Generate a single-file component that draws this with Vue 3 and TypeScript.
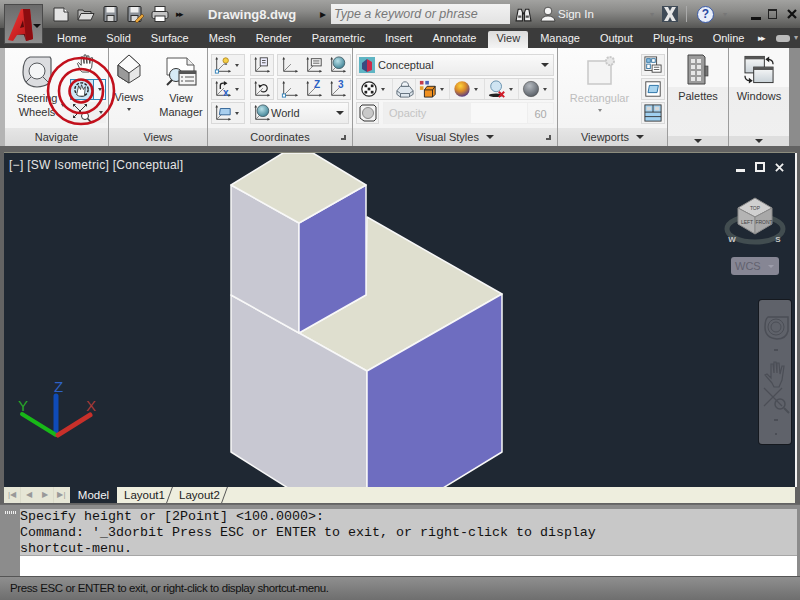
<template>
  <div class="app">
    <svg class="sprite" width="0" height="0" aria-hidden="true">
      <defs>
        <radialGradient id="gold" cx="0.4" cy="0.3" r="0.8">
          <stop offset="0" stop-color="#ffd23a" />
          <stop offset="0.45" stop-color="#d98a2a" />
          <stop offset="1" stop-color="#3a2a9a" />
        </radialGradient>
        <radialGradient id="grey" cx="0.4" cy="0.3" r="0.8">
          <stop offset="0" stop-color="#b5bac0" />
          <stop offset="1" stop-color="#4e545c" />
        </radialGradient>
        <radialGradient id="globe" cx="0.4" cy="0.35" r="0.7">
          <stop offset="0" stop-color="#b8e0e8" />
          <stop offset="1" stop-color="#3b7f92" />
        </radialGradient>
        <linearGradient id="logoRed" x1="0" y1="0" x2="1" y2="1">
          <stop offset="0" stop-color="#f03a36" />
          <stop offset="1" stop-color="#b01014" />
        </linearGradient>
        <linearGradient id="winFill" x1="0" y1="0" x2="0" y2="1">
          <stop offset="0" stop-color="#fafafa" />
          <stop offset="1" stop-color="#c9d2d8" />
        </linearGradient>
      </defs>
      <symbol id="axes" viewBox="0 0 20 20">
        <path d="M3 2v15h15" fill="none" stroke="#3c3c3c" stroke-width="1" />
        <path d="M1.5 4 3 1l1.500 3zM16 15.500l3 1.500-3 1.500z" fill="#3c3c3c" />
        <path d="M3 17 11 9" stroke="#7b7b7b" stroke-width="1" />
      </symbol>
      <symbol id="c-named" viewBox="0 0 20 20">
        <use href="#axes" width="20" height="20" />
        <rect x="1.500" y="15.500" width="3.500" height="3.500" fill="#fff" stroke="#2d7fb8" />
        <circle cx="13" cy="5" r="3" fill="#f4cf45" stroke="#b58a20" />
        <rect x="11.500" y="8" width="3" height="2" fill="#777" />
      </symbol>
      <symbol id="c-form" viewBox="0 0 20 20">
        <use href="#axes" width="20" height="20" />
        <rect x="8" y="2" width="8" height="9" fill="#eef" stroke="#444" />
        <path d="M10 5h4M10 7.500h4" stroke="#444" />
      </symbol>
      <symbol id="c-face" viewBox="0 0 20 20">
        <use href="#axes" width="20" height="20" />
        <path d="M7 10V6q0-2.500 3-2.500h2" fill="none" stroke="#222" stroke-width="1.500" />
        <path d="m11 1 4 2.500-4 2.500z" fill="#222" />
      </symbol>
      <symbol id="c-prev" viewBox="0 0 20 20">
        <use href="#axes" width="20" height="20" />
        <path d="M8 8a4 4 0 1 1 1 4" fill="none" stroke="#222" stroke-width="1.300" />
        <path d="m6 5 4 1-3 3z" fill="#222" />
      </symbol>
      <symbol id="c-plain" viewBox="0 0 20 20">
        <use href="#axes" width="20" height="20" />
      </symbol>
      <symbol id="c-origin" viewBox="0 0 20 20">
        <use href="#axes" width="20" height="20" />
        <rect x="1.500" y="15.500" width="3.500" height="3.500" fill="#fff" stroke="#2d7fb8" />
      </symbol>
      <symbol id="c-list" viewBox="0 0 20 20">
        <use href="#axes" width="20" height="20" />
        <rect x="7" y="3" width="11" height="8" fill="#f4f4f4" stroke="#444" />
        <path d="M9 5.500h7M9 8h7" stroke="#555" />
      </symbol>
      <symbol id="c-globe" viewBox="0 0 20 20">
        <use href="#axes" width="20" height="20" />
        <circle cx="11" cy="7.500" r="6.500" fill="url(#globe)" stroke="#44606a" />
      </symbol>
      <symbol id="c-view" viewBox="0 0 20 20">
        <use href="#axes" width="20" height="20" />
        <path d="M7 5h11v7H6z" fill="#a9cfee" stroke="#2c5f92" />
      </symbol>

      <symbol id="vs-xray" viewBox="0 0 20 20">
        <circle cx="10" cy="10" r="8" fill="#fff" stroke="#222" stroke-width="1.300" />
        <g fill="#222">
          <rect x="5" y="5" width="3" height="3" />
          <rect x="12" y="5" width="3" height="3" />
          <rect x="8.500" y="8.500" width="3" height="3" />
          <rect x="5" y="12" width="3" height="3" />
          <rect x="12" y="12" width="3" height="3" />
        </g>
      </symbol>
      <symbol id="vs-box" viewBox="0 0 20 20">
        <path d="M1 12 5 7h10l4 5v4l-5 3H5l-4-3z" fill="#dfe7ee" stroke="#5a6874" />
        <path d="M6 7q0-5 4-5t4 5z" fill="#eef3f7" stroke="#5a6874" />
        <path d="M1 12l4 3h10l4-3M5 15v4M15 15v4" fill="none" stroke="#5a6874" />
      </symbol>
      <symbol id="vs-color" viewBox="0 0 20 20">
        <rect x="1" y="1" width="4" height="4" fill="#c43a4a" />
        <rect x="7" y="1" width="4" height="4" fill="#4a63b8" />
        <rect x="1" y="7" width="4" height="4" fill="#e8a030" />
        <path d="M6 11l3-4h9v9l-3 3H6z" fill="#f09020" stroke="#222" />
        <path d="M6 11h9v8M15 11l3-4" fill="none" stroke="#222" />
      </symbol>
      <symbol id="vs-gold" viewBox="0 0 20 20">
        <circle cx="10" cy="10" r="8.500" fill="url(#gold)" />
      </symbol>
      <symbol id="vs-shadow" viewBox="0 0 20 20">
        <circle cx="9" cy="7" r="6" fill="#cfe4f2" stroke="#5f8aa8" />
        <ellipse cx="9" cy="17" rx="8" ry="2" fill="#222" />
        <path d="m12 13 6 6m0-6-6 6" stroke="#d01c2a" stroke-width="2.200" />
      </symbol>
      <symbol id="vs-grey" viewBox="0 0 20 20">
        <circle cx="10" cy="10" r="8.500" fill="url(#grey)" stroke="#444" stroke-width="0.600" />
      </symbol>

      <symbol id="vp-config" viewBox="0 0 20 20">
        <rect x="1" y="1" width="13" height="15" fill="#fff" stroke="#444" />
        <rect x="3" y="3" width="4" height="4" fill="#8cc0e4" stroke="#2c6d9c" />
        <rect x="8.500" y="3" width="4" height="4" fill="#fff" stroke="#2c6d9c" />
        <rect x="3" y="9" width="4" height="5" fill="#fff" stroke="#2c6d9c" />
        <rect x="9" y="10" width="10" height="8" fill="#fff" stroke="#444" />
        <path d="M11 12.500h6M11 15h6" stroke="#555" />
      </symbol>
      <symbol id="vp-clip" viewBox="0 0 20 20">
        <rect x="2" y="2" width="16" height="16" fill="#fff" stroke="#444" />
        <path d="M6 6h10l-1.500 8H4.500z" fill="#a8d4ef" stroke="#1d6aa0" />
      </symbol>
      <symbol id="vp-join" viewBox="0 0 20 20">
        <rect x="1" y="1" width="18" height="18" fill="#9fd0f0" stroke="#333" />
        <path d="M10 1v8M1 9h18M1 14h18" stroke="#333" />
        <rect x="3" y="3" width="5" height="4" fill="#d8d8d8" />
        <rect x="12" y="3" width="5" height="4" fill="#d8d8d8" />
      </symbol>
    </svg>

    <header class="titlebar">
      <div class="quick-access">
        <svg v-for="icon in quickIcons" :key="icon.id" class="qa-icon" :style="{ marginRight: icon.gap + 'px' }" viewBox="0 0 18 18">
          <template v-if="icon.id === 'new'">
            <path d="M2 3h10l4 4v9H2z" fill="#e4e4e4" stroke="#333" />
            <path d="M12 3v4h4" fill="#fff" stroke="#333" />
          </template>
          <template v-else-if="icon.id === 'open'">
            <path d="M1 15V5h5l1 1.500h7V9" fill="#bbb" stroke="#333" />
            <path d="M1 15 4 8.500h13L14 15z" fill="#ddd" stroke="#333" />
          </template>
          <template v-else-if="icon.id === 'print'">
            <rect x="4" y="1.500" width="10" height="5" fill="#fff" stroke="#333" />
            <rect x="1" y="6.500" width="16" height="7" rx="1.500" fill="#c5c5c5" stroke="#333" />
            <rect x="4" y="11" width="10" height="5.500" fill="#fff" stroke="#333" />
          </template>
          <template v-else>
            <rect x="2" y="1.500" width="13" height="15" rx="1" fill="#8d9299" stroke="#222" />
            <rect x="4.500" y="2" width="8" height="5.500" fill="#eee" />
            <rect x="5" y="10.500" width="7" height="6" fill="#d8d8d8" stroke="#333" />
            <path v-if="icon.id === 'saveas'" d="m9 16 7-7 2 2-7 7z" fill="#e8a53a" stroke="#5c3a10" stroke-width="0.600" />
          </template>
        </svg>
        <span class="more-arrows">&#9656;&#9656;</span>
      </div>
      <span class="doc-title">Drawing8.dwg</span>
      <span class="search-arrow">&#9656;</span>
      <div class="search-box">Type a keyword or phrase</div>
      <svg class="binoculars" viewBox="0 0 16 16">
        <path d="M1 14 3 3h3l1 3v8zM15 14 13 3h-3L9 6v8z" fill="#eee" stroke="#222" />
        <path d="M3 10h3M10 10h3" stroke="#555" stroke-width="2" />
        <path d="M7 7h2" stroke="#222" stroke-width="2" />
      </svg>
      <svg class="person" viewBox="0 0 16 16">
        <circle cx="8" cy="5" r="3.800" fill="#f4f4f4" stroke="#222" stroke-width="0.700" />
        <path d="M1 15q1-5 7-5t7 5z" fill="#f4f4f4" stroke="#222" stroke-width="0.700" />
      </svg>
      <span class="sign-in">Sign In</span>
      <span class="mini-arrow">&#9662;</span>
      <svg class="x-box" viewBox="0 0 16 16">
        <rect width="16" height="16" fill="#3f4a56" />
        <path d="M2 1h4l2 4 2-4h4l-4 7 4 7h-4l-2-4-2 4H2l4-7z" fill="#e6e6e6" />
      </svg>
      <i class="title-sep"></i>
      <span class="help">?</span>
      <span class="mini-arrow help-arrow">&#9662;</span>
      <div class="win-buttons">
        <i class="win-min"></i>
        <i class="win-max"></i>
        <svg class="win-close" viewBox="0 0 10 10">
          <path d="m1 1 8 8m0-8-8 8" stroke="#111" stroke-width="2.200" />
        </svg>
      </div>
    </header>

    <nav class="tabs">
      <span v-for="tab in tabs" :key="tab" class="tab" :class="{ active: tab === 'View' }">{{ tab }}</span>
      <span class="tab-more">&#9656;&#9656;</span>
      <span class="tab-pill"></span>
      <span class="tab-caret">&#9662;</span>
    </nav>

    <div class="app-button">
      <svg viewBox="0 0 37 38" class="logo">
        <path d="M3 35 16 4h9l3 30-7 2-1-7-8 1-4 6z" fill="url(#logoRed)" />
        <path d="M25 4l3 30-7 2-3-32z" fill="#8c0c10" />
        <path d="M12 30l8-1 1 7-2-6z" fill="#5c0a0c" />
        <path d="M15 23l3-8 1 7z" fill="#5c0a0c" />
      </svg>
      <span class="app-caret"></span>
    </div>

    <section class="ribbon">
      <div class="panel navigate">
        <div class="panel-body">
          <div class="big-btn wheel-btn">
            <svg class="wheel" viewBox="0 0 30 32">
              <path d="M8 1h20l1 2v19q0 8-14 9Q1 30 1 16 1 3 8 1z" fill="#dcdde0" stroke="#55585c" stroke-width="1.200" />
              <circle cx="15" cy="15" r="8" fill="#f4f5f6" stroke="#55585c" />
              <path d="m9 21-5 5m17-5 5 5" stroke="#55585c" />
            </svg>
            <span>Steering</span>
            <span>Wheels</span>
          </div>
          <div class="nav-stack">
            <svg class="nav-hand" viewBox="0 0 22 20">
              <path d="M5 17 2 10l1-1 3 3V3l2 0 1 7V1h2l1 9V2h2l1 8 1-6h2l-1 10-3 5H7z" fill="#fff" stroke="#333" stroke-width="0.900" />
            </svg>
            <div class="orbit-btn">
              <span class="orbit-main">
                <svg class="orbit-icon" viewBox="0 0 20 20">
                  <circle cx="10" cy="10" r="7" fill="none" stroke="#222" stroke-dasharray="3 1.500" stroke-width="1.500" />
                  <path d="M5 15 7 6l2 4 1-5 2 5 2-3-1 10H7z" fill="#fff" stroke="#222" stroke-width="0.800" />
                </svg>
              </span>
              <span class="orbit-arrow"><i class="caret small"></i></span>
            </div>
            <div class="zoom-btn">
              <svg class="zoom-icon" viewBox="0 0 20 20">
                <path d="m2 2 12 12M14 2 2 14" stroke="#333" />
                <path d="M1 1h3L1 4zM15 1v3l-3-3zM1 15v-3l3 3z" fill="#333" />
                <circle cx="13" cy="13" r="3.500" fill="#fff" stroke="#333" />
                <path d="m15.500 15.500 3.500 3.500" stroke="#333" stroke-width="1.500" />
              </svg>
              <i class="caret small"></i>
            </div>
          </div>
          <i class="caret small wheel-caret"></i>
        </div>
        <div class="panel-label">Navigate</div>
      </div>

      <div class="panel views">
        <div class="panel-body">
          <div class="big-btn views-btn">
            <svg class="views-cube" viewBox="0 0 24 30">
              <path d="M12 1 23 11v11L12 29 1 22V11z" fill="#e7e7e7" stroke="#444" />
              <path d="M1 11 12 19 23 11 12 1z" fill="#fbfbfb" stroke="#444" />
              <path d="M12 19v10L1 22V11z" fill="#9a9a9a" stroke="#444" />
            </svg>
            <span>Views</span>
            <i class="caret small"></i>
          </div>
          <div class="big-btn manager-btn">
            <svg class="manager" viewBox="0 0 32 30">
              <path d="M2 1h20l7 7v10H2z" fill="#fff" stroke="#555" />
              <path d="M22 1v7h7" fill="#eee" stroke="#555" />
              <circle cx="11" cy="18" r="6.500" fill="#d7ebf7" stroke="#333" />
              <path d="m7 23-5 5" stroke="#333" stroke-width="2" />
              <rect x="14" y="14" width="17" height="14" fill="#f5f5f5" stroke="#333" />
              <rect x="14" y="14" width="17" height="3" fill="#555" />
              <path d="M16 20h2M20 20h9M16 24h2M20 24h9" stroke="#555" />
            </svg>
            <span>View</span>
            <span>Manager</span>
          </div>
        </div>
        <div class="panel-label">Views</div>
      </div>

      <div class="panel coordinates">
        <div class="panel-body coord-body">
          <div class="coord-col first">
            <div v-for="item in coordFirst" :key="item.id" class="tool split">
              <svg class="ic"><use :href="'#' + item.id" /></svg>
              <b v-if="item.mark" class="cell-mark first-mark">{{ item.mark }}</b>
              <i class="caret small"></i>
            </div>
          </div>
          <div class="coord-main">
            <div v-for="(row, r) in coordRows" :key="r" class="coord-row">
              <div class="tool single"><svg class="ic"><use :href="'#' + row.single" /></svg></div>
              <div class="tool-group">
                <span v-for="cell in row.group" :key="cell.id + cell.mark" class="group-cell">
                  <svg class="ic"><use :href="'#' + cell.id" /></svg>
                  <b v-if="cell.mark" class="cell-mark">{{ cell.mark }}</b>
                </span>
              </div>
            </div>
            <div class="combo world">
              <svg class="ic"><use href="#c-globe" /></svg>
              <span>World</span>
              <i class="caret"></i>
            </div>
          </div>
        </div>
        <div class="panel-label">Coordinates<i class="launcher"></i></div>
      </div>

      <div class="panel visual">
        <div class="panel-body vs-body">
          <div class="combo conceptual">
            <svg class="swatch" viewBox="0 0 16 16">
              <rect width="16" height="16" fill="#5fb5c4" />
              <path d="M8 2 13 5v8l-5 2z" fill="#c92a4a" />
              <path d="M8 2 3 6v6l5 3z" fill="#3a4a80" />
            </svg>
            <span>Conceptual</span>
            <i class="caret"></i>
          </div>
          <div class="vs-row">
            <span v-for="cell in visualCells" :key="cell.id" class="vs-cell" :style="{ width: cell.width + 'px' }">
              <svg class="ic"><use :href="'#' + cell.id" /></svg>
              <i v-if="cell.arrow" class="caret small"></i>
            </span>
          </div>
          <div class="opacity-row">
            <span class="opacity-btn">
              <svg class="ic" viewBox="0 0 18 18">
                <path d="M3 1h12l2 2v12l-2 2H5l-4-3V3z" fill="#f3f3f3" stroke="#333" />
                <circle cx="9" cy="9" r="5.500" fill="#c9c9c9" stroke="#8a8a8a" />
              </svg>
            </span>
            <div class="opacity-slider"><span class="opacity-fill">Opacity</span></div>
            <span class="opacity-value">60</span>
          </div>
        </div>
        <div class="panel-label">Visual Styles<i class="caret label-caret"></i><i class="launcher"></i></div>
      </div>

      <div class="panel viewports">
        <div class="panel-body vp-body">
          <div class="big-btn rect-btn">
            <svg class="rect-icon" viewBox="0 0 30 30">
              <rect x="1" y="6" width="23" height="23" fill="#f4f4f4" stroke="#c8c8c8" stroke-width="1.500" />
              <circle cx="23" cy="6" r="4" fill="#e8e8e8" stroke="#c8c8c8" stroke-dasharray="2 1" stroke-width="2" />
            </svg>
            <span>Rectangular</span>
            <i class="caret small faint"></i>
          </div>
          <div class="vp-tools">
            <span v-for="id in viewportIcons" :key="id" class="tool single"><svg class="ic"><use :href="'#' + id" /></svg></span>
          </div>
        </div>
        <div class="panel-label">Viewports<i class="caret label-caret"></i></div>
      </div>

      <div class="panel tall palettes">
        <div class="panel-body tall-body">
          <svg class="palette-icon" viewBox="0 0 22 32">
            <path d="M1 1h15l2 2v27H1z" fill="#9b9b9b" stroke="#444" />
            <g fill="#e6e6e6">
              <rect v-for="cell in paletteCells" :key="cell.x + '-' + cell.y" :x="cell.x" :y="cell.y" width="4" height="4" />
            </g>
            <rect x="18" y="12" width="3" height="10" fill="#777" stroke="#333" stroke-width="0.600" />
          </svg>
          <span>Palettes</span>
        </div>
        <div class="tall-foot"><i class="caret"></i></div>
      </div>

      <div class="panel tall windows">
        <div class="panel-body tall-body">
          <svg class="windows-icon" viewBox="0 0 32 29">
            <rect x="1" y="1" width="20" height="17" fill="url(#winFill)" stroke="#333" />
            <rect x="1" y="1" width="20" height="3" fill="#555" />
            <rect x="10" y="12" width="20" height="16" fill="url(#winFill)" stroke="#333" />
            <rect x="10" y="12" width="20" height="3" fill="#555" />
            <path d="M24 4q6 0 6 5M1 21q0 5 5 5" fill="none" stroke="#222" stroke-width="1.300" />
            <path d="m26 1-4 3 4 3zM5 23l4 3-4 3z" fill="#222" />
          </svg>
          <span>Windows</span>
        </div>
        <div class="tall-foot"><i class="caret"></i></div>
      </div>

      <svg class="target" viewBox="0 0 70 70">
        <circle cx="35" cy="35" r="33" />
        <circle cx="35" cy="35" r="22" />
        <circle cx="35" cy="35" r="11.500" />
      </svg>
    </section>

    <main class="viewport">
      <svg class="model" viewBox="4 153 791 334">
        <g stroke="#f8f8f8" stroke-width="1.500" stroke-linejoin="round">
          <polygon class="face-top" points="367,217 502,294 367,371 299,333 366,295" />
          <polygon class="face-left" points="231,295 367,371 367,488 288,488 231,452" />
          <polygon class="face-right" points="367,371 502,294 502,452 443,488 367,488" />
          <polygon class="face-left" points="231,185 299,223 299,333 231,295" />
          <polygon class="face-right" points="299,223 366,185 366,295 299,333" />
          <polygon class="face-top" points="231,185 283,153 313,153 366,185 299,223" />
        </g>
        <g fill="none" stroke-width="1">
          <path d="M56 433V396" stroke="#0f4bb8" stroke-width="5" stroke-linecap="round" />
          <path d="M56 435 22 414" stroke="#18b818" stroke-width="4" stroke-linecap="round" />
          <path d="M58 435 90 415" stroke="#c8302a" stroke-width="5" stroke-linecap="round" />
        </g>
        <text x="54" y="392" class="axis-z">Z</text>
        <text x="18" y="411" class="axis-y">Y</text>
        <text x="86" y="411" class="axis-x">X</text>
      </svg>

      <div class="view-label">[&minus;] [SW Isometric] [Conceptual]</div>

      <div class="view-controls">
        <i class="vc-min"></i>
        <i class="vc-max"></i>
        <svg class="vc-close" viewBox="0 0 10 10">
          <path d="m1 1 8 8m0-8-8 8" stroke="#f0f0f0" stroke-width="2" />
        </svg>
      </div>

      <svg class="view-cube" viewBox="0 0 64 50">
        <ellipse cx="32" cy="32" rx="28" ry="13" fill="none" stroke="#424d50" stroke-width="5" />
        <polygon points="32,1 49,11 32,20 15,11" fill="#d0d0d0" stroke="#8a8a8a" />
        <polygon points="15,11 32,20 32,37 15,27" fill="#b4b4b4" stroke="#8a8a8a" />
        <polygon points="32,20 49,11 49,27 32,37" fill="#a8a8a8" stroke="#8a8a8a" />
        <text x="32" y="13" class="cube-text">TOP</text>
        <text x="24" y="27" class="cube-text">LEFT</text>
        <text x="41" y="27" class="cube-text">FRONT</text>
        <text x="9" y="45" class="compass">W</text>
        <text x="55" y="45" class="compass">S</text>
      </svg>

      <div class="wcs">WCS<i></i></div>

      <div class="nav-bar">
        <svg viewBox="0 0 30 140" class="nav-bar-icons">
          <g fill="none" stroke="#4b4e56">
            <path d="M8 17h20v14q-2 8-11 8Q5 38 5 27 5 19 8 17z" stroke-width="1.500" />
            <circle cx="16" cy="27" r="5" />
            <circle cx="16" cy="27" r="8" />
            <path d="M12 83 5 75l2-1 4 4V64h2l1 9V62h2l1 11V63h2l1 11 2-8h2l-2 14-3 7H14z" stroke-width="1.200" />
            <path d="m4 88 18 18M22 88 4 106" stroke-width="1.200" />
            <circle cx="20" cy="104" r="5" stroke-width="1.500" />
            <path d="m24 108 5 5" stroke-width="2" />
            <path d="M14 50h4M14 120h4M15 134h2" stroke-width="2" />
          </g>
        </svg>
      </div>
    </main>

    <div class="layout-tabs">
      <div class="layout-nav">
        <span v-for="(glyph, i) in layoutNav" :key="i" class="nav-cell">{{ glyph }}</span>
      </div>
      <span class="ltab model-tab">Model</span>
      <span class="ltab">Layout1</span>
      <span class="ltab">Layout2</span>
    </div>

    <section class="command">
      <div class="command-grip"><i></i></div>
      <div class="command-area">
        <div class="command-history">
          <div v-for="line in commandLines" :key="line">{{ line }}</div>
        </div>
        <div class="command-input"></div>
      </div>
    </section>

    <footer class="status">Press ESC or ENTER to exit, or right-click to display shortcut-menu.</footer>
  </div>
</template>

<script setup lang="ts">
interface QuickIcon {
  id: string
  gap: number
}

interface CoordCell {
  id: string
  mark?: string
}

interface VisualCell {
  id: string
  width: number
  arrow: boolean
}

const quickIcons: QuickIcon[] = [
  { id: 'new', gap: 7 },
  { id: 'open', gap: 7 },
  { id: 'save', gap: 6 },
  { id: 'saveas', gap: 7 },
  { id: 'print', gap: 7 },
]

const tabs = [
  'Home',
  'Solid',
  'Surface',
  'Mesh',
  'Render',
  'Parametric',
  'Insert',
  'Annotate',
  'View',
  'Manage',
  'Output',
  'Plug-ins',
  'Online',
]

const coordFirst: CoordCell[] = [{ id: 'c-named' }, { id: 'c-face', mark: 'x' }, { id: 'c-view' }]

const coordRows: { single: string; group: CoordCell[] }[] = [
  { single: 'c-form', group: [{ id: 'c-plain' }, { id: 'c-list' }, { id: 'c-globe' }] },
  { single: 'c-prev', group: [{ id: 'c-origin' }, { id: 'c-plain', mark: 'Z' }, { id: 'c-plain', mark: '3' }] },
]

const visualCells: VisualCell[] = [
  { id: 'vs-xray', width: 36, arrow: true },
  { id: 'vs-box', width: 24, arrow: false },
  { id: 'vs-color', width: 34, arrow: true },
  { id: 'vs-gold', width: 35, arrow: true },
  { id: 'vs-shadow', width: 35, arrow: true },
  { id: 'vs-grey', width: 34, arrow: true },
]

const viewportIcons = ['vp-config', 'vp-clip', 'vp-join']

const paletteCells = [5, 11, 17, 23].flatMap((y) => [4, 10].map((x) => ({ x, y })))

const layoutNav = ['|◀', '◀', '▶', '▶|']

const commandLines = [
  'Specify height or [2Point] <100.0000>:',
  "Command: '_3dorbit Press ESC or ENTER to exit, or right-click to display",
  'shortcut-menu.',
]
</script>

<style>
html,
body {
  margin: 0;
  overflow: hidden;
}
</style>

<style scoped>
.app {
  position: relative;
  width: 800px;
  height: 600px;
  overflow: hidden;
  display: flex;
  flex-direction: column;
  background: #636363;
  font-family: 'Liberation Sans', Arial, sans-serif;
  font-size: 11px;
  color: #222;
}

.sprite {
  position: absolute;
}

/* title bar */
.titlebar {
  height: 28px;
  flex: none;
  display: flex;
  align-items: center;
  background: linear-gradient(#a2a2a0, #8b8b89 40%, #565654);
  color: #f2f2f2;
}

.quick-access {
  display: flex;
  align-items: center;
  margin-left: 52px;
  width: 156px;
}

.qa-icon {
  width: 18px;
  height: 18px;
}

.more-arrows {
  font-size: 9px;
  letter-spacing: -2px;
  color: #111;
}

.doc-title {
  width: 112px;
  font-size: 13px;
  font-weight: bold;
  color: #f0f0f0;
}

.search-arrow {
  width: 11px;
  color: #111;
  font-size: 12px;
}

.search-box {
  width: 176px;
  height: 20px;
  line-height: 20px;
  padding-left: 3px;
  background: linear-gradient(#f2f2f2, #e2e2e2);
  color: #777;
  font-style: italic;
  font-size: 12.500px;
  margin-right: 5px;
}

.binoculars {
  width: 17px;
  height: 17px;
  margin-right: 8px;
}

.person {
  width: 16px;
  height: 16px;
  margin-right: 2px;
}

.sign-in {
  width: 92px;
  font-size: 11.500px;
}

.mini-arrow {
  width: 12px;
  font-size: 8px;
  color: #777;
}

.x-box {
  width: 16px;
  height: 16px;
  margin-right: 8px;
}

.title-sep {
  width: 1px;
  height: 16px;
  background: #aaa;
  margin-right: 10px;
}

.help {
  width: 15px;
  height: 15px;
  margin-right: 9px;
  border-radius: 50%;
  border: 1px solid #3a5aa8;
  box-sizing: content-box;
  background: #e8eefa;
  color: #2a4aa0;
  font-size: 12px;
  font-weight: bold;
  line-height: 15px;
  text-align: center;
}

.help-arrow {
  width: 28px;
}

.win-buttons {
  display: flex;
  align-items: center;
}

.win-min {
  width: 10px;
  height: 3px;
  margin-top: 8px;
  background: #111;
}

.win-max {
  width: 7px;
  height: 7px;
  border: 1px solid #222;
  border-top-width: 2px;
  margin-left: 7px;
}

.win-close {
  width: 10px;
  height: 10px;
  margin-left: 10px;
}

/* tab strip */
.tabs {
  height: 20px;
  flex: none;
  display: flex;
  align-items: stretch;
  padding-left: 49px;
  background: #3b3b3b;
  color: #f2f2f2;
  white-space: nowrap;
}

.tab {
  padding: 0 8px;
  margin-right: 4px;
  line-height: 20px;
  font-size: 11px;
}

.tab.active {
  margin-top: 3px;
  line-height: 15px;
  background: linear-gradient(#dbdbdb, #f4f4f4);
  color: #333;
  border-radius: 2px 2px 0 0;
}

.tab-more {
  margin-left: 2px;
  line-height: 20px;
  font-size: 9px;
  letter-spacing: -2px;
  width: 18px;
}

.tab-pill {
  width: 14px;
  height: 7px;
  margin-top: 7px;
  border-radius: 3px;
  background: #bbb;
}

.tab-caret {
  margin-left: 4px;
  line-height: 20px;
  font-size: 8px;
  color: #aaa;
}

/* application button */
.app-button {
  position: absolute;
  left: 4px;
  top: 4px;
  width: 39px;
  height: 40px;
  box-sizing: border-box;
  border: 1px solid #4a4a4a;
  background: linear-gradient(#6b6b6b, #8d8d8d);
}

.logo {
  width: 37px;
  height: 38px;
  display: block;
}

.app-caret {
  position: absolute;
  left: 28px;
  top: 19px;
  border: 4px solid transparent;
  border-top-color: #111;
}

/* ribbon */
.ribbon {
  position: relative;
  height: 98px;
  flex: none;
  display: flex;
  padding-left: 5px;
  background: linear-gradient(90deg, #b4b4b4, #b4b4b4 5px, #8c8c8c 5px);
}

.panel {
  box-sizing: border-box;
  display: flex;
  flex-direction: column;
  border-right: 1px solid #9c9c9c;
  background: linear-gradient(#fcfcfc, #f2f2f2);
}

.navigate {
  width: 104px;
}

.views {
  width: 99px;
}

.coordinates {
  width: 145px;
}

.visual {
  width: 205px;
}

.viewports {
  width: 110px;
}

.palettes {
  width: 61px;
}

.windows {
  width: 60px;
  border-right: none;
}

.panel-body {
  position: relative;
  height: 80px;
  box-sizing: border-box;
  flex: none;
  display: flex;
  padding-top: 6px;
}

.panel-label {
  position: relative;
  flex: 1;
  display: flex;
  align-items: center;
  justify-content: center;
  background: linear-gradient(#e6e6e6, #d9d9d9);
  color: #333;
}

.caret {
  display: inline-block;
  width: 0;
  height: 0;
  border: 4px solid transparent;
  border-top: 4px solid #333;
  border-bottom: 0;
}

.caret.small {
  border-width: 3px 2.500px 0;
  border-top-color: #444;
}

.caret.faint {
  border-top-color: #888;
}

.label-caret {
  margin-left: 7px;
}

.launcher {
  position: absolute;
  right: 6px;
  top: 7px;
  width: 5px;
  height: 5px;
  border-right: 2px solid #555;
  border-bottom: 2px solid #555;
  box-sizing: border-box;
}

.big-btn {
  display: flex;
  flex-direction: column;
  align-items: center;
  color: #333;
  line-height: 14px;
}

.wheel-btn {
  width: 64px;
}

.wheel {
  width: 30px;
  height: 32px;
  margin-top: 2px;
  margin-bottom: 3px;
}

.wheel-caret {
  position: absolute;
  left: 56px;
  top: 56px;
}

.nav-stack {
  display: flex;
  flex-direction: column;
  width: 36px;
  margin-left: 1px;
}

.nav-hand {
  width: 24px;
  height: 19px;
  margin-left: 4px;
  margin-bottom: 6px;
}

.orbit-btn {
  display: flex;
  height: 21px;
  box-sizing: border-box;
  border: 1px solid #2f86b8;
  background: #cbe6f6;
  margin-bottom: 2px;
}

.orbit-main {
  width: 22px;
  border-right: 1px solid #2f86b8;
}

.orbit-icon {
  width: 19px;
  height: 19px;
  margin-left: 1px;
  display: block;
}

.orbit-arrow {
  flex: 1;
  display: flex;
  align-items: center;
  justify-content: center;
  background: #f4fafe;
}

.zoom-btn {
  display: flex;
  align-items: center;
  justify-content: space-between;
  height: 21px;
  padding: 0 3px 0 2px;
  background: #f0f0f0;
}

.zoom-icon {
  width: 20px;
  height: 20px;
}

.views-btn {
  width: 40px;
}

.views-cube {
  width: 24px;
  height: 30px;
  margin-bottom: 6px;
}

.views-btn .caret {
  margin-top: 4px;
}

.manager-btn {
  width: 48px;
  margin-left: 8px;
}

.manager {
  width: 32px;
  height: 30px;
  margin: 3px 0 4px;
}

.coord-body {
  gap: 5px;
  padding-left: 3px;
}

.coord-col {
  display: flex;
  flex-direction: column;
  gap: 2px;
}

.tool {
  position: relative;
  display: flex;
  align-items: center;
  justify-content: center;
  height: 22px;
  box-sizing: border-box;
  border: 1px solid #d9d9d9;
  background: #f2f2f2;
}

.split {
  width: 34px;
  gap: 3px;
  justify-content: flex-start;
  padding-left: 2px;
}

.single {
  width: 24px;
}

.ic {
  width: 18px;
  height: 18px;
  flex: none;
}

.cell-mark {
  position: absolute;
  left: 12px;
  top: 1px;
  font-size: 10px;
  line-height: 10px;
  color: #2a5fc4;
}

.first-mark {
  left: 11px;
  top: 9px;
}

.coord-main {
  display: flex;
  flex-direction: column;
  gap: 2px;
}

.coord-row {
  display: flex;
  gap: 3px;
}

.tool-group {
  display: flex;
  height: 22px;
  box-sizing: border-box;
  border: 1px solid #d9d9d9;
  background: #f2f2f2;
}

.group-cell {
  position: relative;
  width: 24px;
  display: flex;
  align-items: center;
  justify-content: center;
}

.combo {
  display: flex;
  align-items: center;
  height: 22px;
  box-sizing: border-box;
  border: 1px solid #d9d9d9;
  background: linear-gradient(#fafafa, #ececec);
  color: #333;
}

.combo .caret {
  margin-left: auto;
  margin-right: 4px;
}

.world {
  width: 99px;
  padding-left: 2px;
}

.vs-body {
  flex-direction: column;
  gap: 2px;
  padding-left: 3px;
}

.conceptual {
  width: 198px;
  padding-left: 2px;
  gap: 3px;
}

.swatch {
  width: 16px;
  height: 16px;
}

.vs-row {
  display: flex;
  width: 198px;
  height: 22px;
  box-sizing: border-box;
  border: 1px solid #d9d9d9;
  background: #f2f2f2;
}

.vs-cell {
  display: flex;
  align-items: center;
  justify-content: flex-start;
  gap: 3px;
  padding-left: 3px;
  box-sizing: border-box;
  border-right: 1px solid #e0e0e0;
}

.opacity-row {
  display: flex;
  height: 22px;
}

.opacity-btn {
  width: 23px;
  display: flex;
  align-items: center;
  justify-content: center;
  box-sizing: border-box;
  border: 1px solid #d9d9d9;
  background: #f2f2f2;
}

.opacity-slider {
  width: 145px;
  margin-left: 4px;
  box-sizing: border-box;
  border: 1px solid #eeeeee;
  background: #f8f8f8;
}

.opacity-fill {
  display: block;
  width: 87px;
  height: 100%;
  padding-left: 5px;
  box-sizing: border-box;
  line-height: 20px;
  background: #efefef;
  color: #c4c4c4;
}

.opacity-value {
  width: 26px;
  line-height: 22px;
  text-align: center;
  color: #aaa;
  border: 1px solid #eeeeee;
  border-left: none;
  box-sizing: border-box;
}

.rect-btn {
  width: 83px;
  color: #bdbdbd;
}

.rect-icon {
  width: 30px;
  height: 30px;
  margin-top: 1px;
  margin-bottom: 6px;
  margin-left: 4px;
}

.rect-btn .caret {
  margin-top: 4px;
}

.vp-tools {
  display: flex;
  flex-direction: column;
  gap: 2px;
}

.tall {
  background: linear-gradient(#f8f8f8, #f8f8f8 40%, #eeeeee 40%, #f0f0f0);
}

.tall-body {
  flex-direction: column;
  align-items: center;
  height: 88px;
  color: #333;
  line-height: 14px;
}

.palette-icon {
  width: 22px;
  height: 32px;
  margin-bottom: 3px;
}

.windows-icon {
  width: 31px;
  height: 29px;
  margin-top: 1px;
  margin-bottom: 5px;
}

.tall-foot {
  flex: 1;
  display: flex;
  align-items: center;
  justify-content: center;
  background: #dedede;
}

.target {
  position: absolute;
  left: 46px;
  top: 8px;
  width: 70px;
  height: 70px;
  fill: none;
  stroke: #c2101c;
  stroke-width: 2.600;
}

/* drawing area */
.viewport {
  position: relative;
  height: 334px;
  flex: none;
  margin: 7px 5px 0 4px;
  box-sizing: border-box;
  background: #1f2833;
  box-shadow: 0 -1px 0 #8c8c7e, 2px 0 0 #f2f2f2;
}

.model {
  display: block;
  width: 791px;
  height: 334px;
}

.face-top {
  fill: #dfdfcf;
}

.face-left {
  fill: #c8c8d2;
}

.face-right {
  fill: #6e6dc0;
}

.axis-z,
.axis-y,
.axis-x {
  font: 15px 'Liberation Sans', sans-serif;
  text-anchor: start;
}

.axis-z {
  fill: #2e62c8;
}

.axis-y {
  fill: #28a828;
}

.axis-x {
  fill: #a83a38;
}

.view-label {
  position: absolute;
  left: 5px;
  top: 5px;
  color: #e6e6e6;
  font-size: 12px;
  letter-spacing: 0.280px;
}

.view-controls {
  position: absolute;
  right: 11px;
  top: 9px;
  display: flex;
  align-items: center;
  gap: 10px;
}

.vc-min {
  width: 9px;
  height: 3px;
  margin-top: 6px;
  background: #f0f0f0;
}

.vc-max {
  width: 6px;
  height: 6px;
  border: 2px solid #f0f0f0;
}

.vc-close {
  width: 9px;
  height: 9px;
}

.view-cube {
  position: absolute;
  left: 719px;
  top: 44px;
  width: 64px;
  height: 50px;
}

.cube-text {
  font: 5px 'Liberation Sans', sans-serif;
  fill: #444;
  text-anchor: middle;
}

.compass {
  font: bold 8px 'Liberation Sans', sans-serif;
  fill: #c8c8c8;
  text-anchor: middle;
}

.wcs {
  position: absolute;
  left: 727px;
  top: 104px;
  width: 48px;
  height: 18px;
  box-sizing: border-box;
  display: flex;
  align-items: center;
  padding-left: 4px;
  border-radius: 3px;
  background: #868694;
  color: #62626f;
}

.wcs i {
  margin-left: 7px;
  border: 3px solid transparent;
  border-top-color: #9d9dab;
  border-bottom: 0;
}

.nav-bar {
  position: absolute;
  left: 755px;
  top: 147px;
  width: 32px;
  height: 144px;
  border-radius: 3px;
  background: #5f626a;
  box-shadow: 0 0 0 1px #15191f;
}

.nav-bar-icons {
  display: block;
  width: 30px;
  height: 140px;
  margin-left: 1px;
}

/* layout tabs */
.layout-tabs {
  height: 16px;
  flex: none;
  margin: 0 5px 0 4px;
  display: flex;
  align-items: stretch;
  background: #eeeede;
}

.layout-nav {
  display: flex;
  width: 66px;
  background: #dbdbca;
}

.nav-cell {
  width: 16px;
  margin-right: 0.500px;
  text-align: center;
  line-height: 16px;
  font-size: 8px;
  color: #999;
  background: #e6e6d6;
}

.ltab {
  position: relative;
  width: 55px;
  text-align: center;
  line-height: 16px;
  font-size: 11.500px;
  color: #222;
}

.ltab::after {
  content: '';
  position: absolute;
  right: 2px;
  top: 0;
  bottom: 0;
  border-right: 1px solid #555;
  transform: skewX(-20deg);
}

.model-tab {
  width: 47px;
  color: #f4f4f4;
  background: #1f2833;
}

.model-tab::after {
  display: none;
}

/* command window */
.command {
  height: 72px;
  flex: none;
  margin-top: 1px;
  display: flex;
  padding-top: 4px;
  box-sizing: border-box;
  background: #8c8c8c;
  border-top: 1px solid #6a6a6a;
}

.command-grip {
  width: 20px;
  padding: 2px 0 0 5px;
  box-sizing: border-box;
}

.command-grip i {
  display: block;
  width: 11px;
  height: 3px;
  background: repeating-linear-gradient(90deg, #eee 0 1px, transparent 1px 2px);
}

.command-area {
  width: 777px;
  display: flex;
  flex-direction: column;
  background: #fff;
}

.command-history {
  height: 47px;
  box-sizing: border-box;
  background: #c8c8c8;
  border-bottom: 1px solid #a6a6a6;
  font-family: 'Liberation Mono', monospace;
  font-size: 13.333px;
  line-height: 16px;
  color: #111;
  white-space: pre;
}

.command-input {
  flex: 1;
}

/* status bar */
.status {
  flex: 1;
  padding-left: 10px;
  line-height: 23px;
  font-size: 11.500px;
  letter-spacing: -0.400px;
  color: #111;
  background: linear-gradient(#8f8f8f, #6e6e6e);
  border-top: 1px solid #555;
}
</style>
